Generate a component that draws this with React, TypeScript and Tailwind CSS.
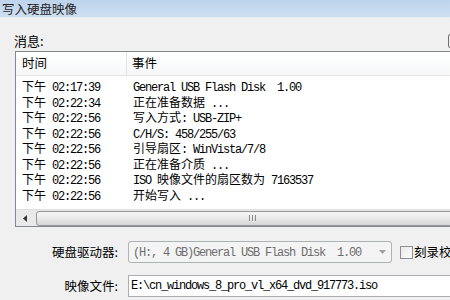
import React from 'react';

const CJK = /([\u2000-\u206f\u3000-\u9fff\uff00-\uffef]+)/;

// Mixed text: CJK runs at full width, Latin runs as half-width mono (SimSun-like)
const Mixed: React.FC<{ text: string }> = ({ text }) => (
  <>
    {text.split(CJK).filter(Boolean).map((part, i) =>
      CJK.test(part) ? (
        <span key={i} className="font-['Noto_Sans_CJK_SC',sans-serif]">{part}</span>
      ) : (
        <span key={i} className="font-['Liberation_Mono',monospace] tracking-[-1.2px]">{part}</span>
      )
    )}
  </>
);

const rows: [string, string][] = [
  ['下午 02:17:39', 'General USB Flash Disk  1.00'],
  ['下午 02:22:34', '正在准备数据 ...'],
  ['下午 02:22:56', '写入方式: USB-ZIP+'],
  ['下午 02:22:56', 'C/H/S: 458/255/63'],
  ['下午 02:22:56', '引导扇区: WinVista/7/8'],
  ['下午 02:22:56', '正在准备介质 ...'],
  ['下午 02:22:56', 'ISO 映像文件的扇区数为 7163537'],
  ['下午 02:22:56', '开始写入 ...'],
];

export default function App() {
  return (
    <div className="w-[450px] h-[300px] overflow-hidden bg-[#f0f0f0] text-[12px] text-black font-['Noto_Sans_CJK_SC',sans-serif]">
      {/* Title bar */}
      <div className="h-[18px] bg-gradient-to-b from-[#bdd4ec] to-[#cfdff1] border-b border-[#e4edf7] pl-[2px] pt-[1px] leading-[15px] text-[12.5px] text-[#1e1e1e] whitespace-nowrap">
        写入硬盘映像
      </div>

      <div className="pl-[15px]">
        {/* Message label row */}
        <div className="flex items-center w-[435px] h-[16px] mt-[15px] mb-[2px]">
          <span className="-ml-[1px] leading-[16px] text-[13px]">消息:</span>
          <div className="ml-auto -mr-[10px] w-[12px] h-[14px] shrink-0 border border-[#707070] rounded-[2px] bg-[#ececec]" />
        </div>

        {/* List view */}
        <div className="w-[470px] h-[176px] border border-[#828790] bg-white flex flex-col">
          <div className="h-[24px] shrink-0 flex items-center border-b border-[#e5e5e5] bg-gradient-to-b from-white to-[#f7f8f9] text-[12.5px]">
            <div className="w-[111px] shrink-0 pl-[6px] h-full flex items-center border-r border-[#e2e3e4]">时间</div>
            <div className="pl-[5px]">事件</div>
          </div>
          <div className="flex-1 overflow-hidden pt-[2px]">
            {rows.map(([t, e], i) => (
              <div key={i} className="flex h-[15.5px] leading-[15.5px] whitespace-pre">
                <div className="w-[112px] shrink-0 pl-[6px]"><Mixed text={t} /></div>
                <div className="pl-[5px]"><Mixed text={e} /></div>
              </div>
            ))}
          </div>
          {/* Horizontal scrollbar */}
          <div className="h-[17px] shrink-0 flex items-center bg-[#e9e9e9] border-t border-[#e0e0e0]">
            <div className="w-[19px] h-full shrink-0 flex items-center justify-center">
              <svg width="5" height="7" viewBox="0 0 5 7"><path d="M4 0 L0 3.5 L4 7 Z" fill="#333" /></svg>
            </div>
            <div className="ml-[1px] flex-1 h-[15px] rounded-l-[3px] border border-[#979797] bg-gradient-to-b from-[#f6f6f6] via-[#e9e9e9] to-[#d6d6d6] flex items-center">
              <div className="ml-[212px] flex gap-[2px]">
                <div className="w-[1px] h-[6px] bg-[#8a8a8a]" />
                <div className="w-[1px] h-[6px] bg-[#8a8a8a]" />
                <div className="w-[1px] h-[6px] bg-[#8a8a8a]" />
              </div>
            </div>
          </div>
        </div>
      </div>

      {/* Form rows */}
      <div className="mt-[14px] flex items-center h-[22px]">
        <div className="w-[119px] shrink-0 text-right pr-[1px] text-[12.5px]">硬盘驱动器:</div>
        <div className="ml-[9px] w-[264px] shrink-0 h-[22px] border border-[#adb2b5] rounded-[3px] bg-[#f4f4f4] flex items-center pl-[4px] whitespace-pre text-[#6d6d6d]">
          <span className="flex-1"><Mixed text="(H:, 4 GB)General USB Flash Disk  1.00" /></span>
          <svg className="mr-[5px] shrink-0" width="7" height="4" viewBox="0 0 7 4"><path d="M0 0 L7 0 L3.5 4 Z" fill="#a0a0a0" /></svg>
        </div>
        <div className="ml-[8px] w-[13px] h-[13px] shrink-0 border border-[#8f8f8f] bg-gradient-to-br from-[#e8e8e8] to-white" />
        <span className="ml-[1px] shrink-0 whitespace-nowrap text-[12.5px]">刻录校验</span>
      </div>
      <div className="mt-[12px] flex items-center h-[22px]">
        <div className="w-[119px] shrink-0 text-right pr-[1px] text-[12.5px]">映像文件:</div>
        <div className="ml-[9px] w-[340px] shrink-0 h-[22px] border border-[#abadb3] bg-white flex items-center pl-[2px] whitespace-pre">
          <Mixed text="E:\cn_windows_8_pro_vl_x64_dvd_917773.iso" />
        </div>
      </div>
    </div>
  );
}
